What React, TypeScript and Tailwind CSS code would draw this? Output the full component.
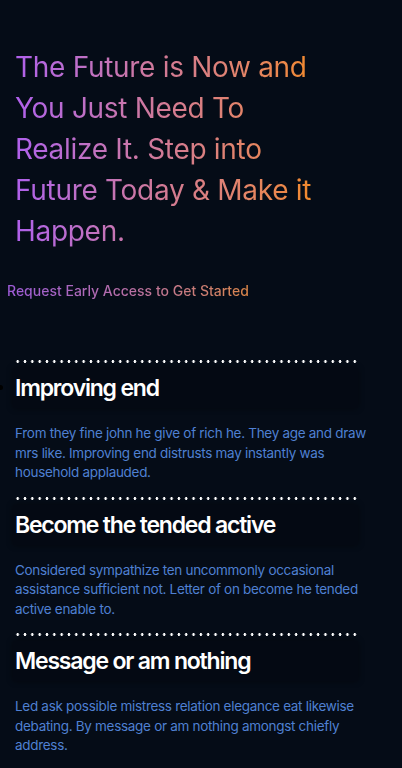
import React from "react";

const sections = [
  {
    title: "Improving end",
    body: "From they fine john he give of rich he. They age and draw mrs like. Improving end distrusts may instantly was household applauded.",
    marker: true,
  },
  {
    title: "Become the tended active",
    body: "Considered sympathize ten uncommonly occasional assistance sufficient not. Letter of on become he tended active enable to.",
    marker: false,
  },
  {
    title: "Message or am nothing",
    body: "Led ask possible mistress relation elegance eat likewise debating. By message or am nothing amongst chiefly address.",
    marker: false,
  },
];

function Dots() {
  return (
    <div className="h-[3px] w-[343px] ml-[14px] bg-[radial-gradient(circle,#ffffff_1.1px,transparent_1.6px)] bg-[length:7.33px_3px] bg-repeat-x" />
  );
}

export default function App() {
  return (
    <div
      className="min-h-[768px] w-full bg-[#050c17] overflow-hidden"
      style={{ fontFamily: "Inter, 'Noto Sans', sans-serif" }}
    >
      <div className="pt-[47px] pl-[15px]">
        <h1 className="inline-block text-[28px] leading-[41px] font-normal tracking-[-0.3px] bg-gradient-to-r from-[#b060ec] via-[#d27a96] to-[#f28a2a] bg-clip-text text-transparent">
          The Future is Now and
          <br />
          You Just Need To
          <br />
          Realize It. Step into
          <br />
          Future Today &amp; Make it
          <br />
          Happen.
        </h1>
      </div>
      <div className="pl-[7px] mt-[26px]">
        <p className="inline-block text-[14px] leading-[20px] font-medium tracking-[0px] bg-gradient-to-r from-[#9d5ad8] via-[#b86fa6] to-[#d98445] bg-clip-text text-transparent">
          Request Early Access to Get Started
        </p>
      </div>
      <div className="mt-[58px] flex flex-col gap-[14px]">
        {sections.map((s) => (
          <div key={s.title} className="flex flex-col">
            <Dots />
            <div className="relative mt-[5px] ml-[13px] w-[345px] h-[40px] bg-[#040913] shadow-[0_0_6px_rgba(0,0,0,0.45)] flex items-center pl-[2px]">
              {s.marker && (
                <span className="absolute left-[-15px] top-[17px] w-[5px] h-[5px] rounded-full bg-black" />
              )}
              <h2 className="text-[23px] leading-[30px] font-semibold tracking-[-1.2px] text-white">
                {s.title}
              </h2>
            </div>
            <p className="mt-[16px] pl-[15px] pr-[17px] text-[13.5px] leading-[19.5px] tracking-[-0.3px] text-[#4f80d2]">
              {s.body}
            </p>
          </div>
        ))}
      </div>
    </div>
  );
}
